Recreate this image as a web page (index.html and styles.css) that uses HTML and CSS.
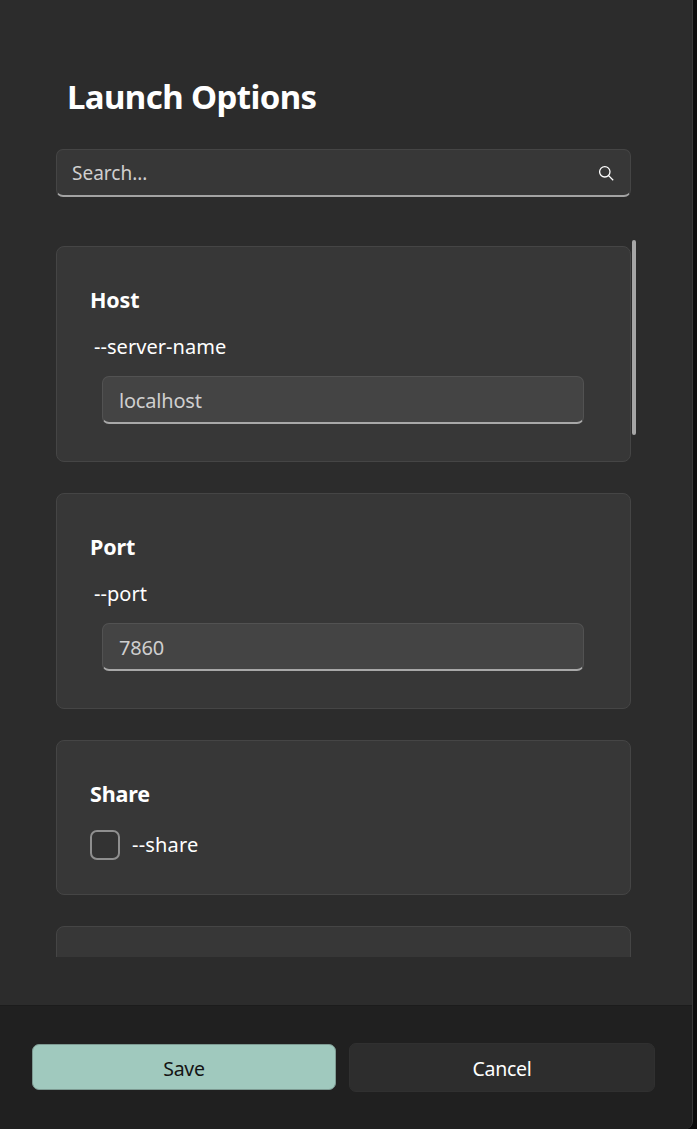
FILE: index.html
```html
<!DOCTYPE html>
<html lang="en">
<head>
<meta charset="utf-8">
<title>Launch Options</title>
<link rel="stylesheet" href="styles.css">
</head>
<body>
<div class="dialog">
  <main class="content">
    <h1 class="title">Launch Options</h1>
    <div class="field search">
      <span class="field-text">Search...</span>
      <svg class="search-icon" width="16" height="16" viewBox="0 0 16 16" fill="none" stroke="#fff" stroke-width="1.3"><circle cx="6.8" cy="6.8" r="5.2"/><path d="M10.6 10.6 15.2 15.2"/></svg>
    </div>
    <div class="scroller">
      <section class="card">
        <h2 class="card-title">Host</h2>
        <div class="option-name">--server-name</div>
        <div class="field inner"><span class="field-text">localhost</span></div>
      </section>
      <section class="card">
        <h2 class="card-title">Port</h2>
        <div class="option-name">--port</div>
        <div class="field inner"><span class="field-text">7860</span></div>
      </section>
      <section class="card card-check">
        <h2 class="card-title">Share</h2>
        <div class="check-row"><span class="checkbox"></span><span class="check-label">--share</span></div>
      </section>
      <section class="card card-cut"></section>
      <div class="scrollbar"></div>
    </div>
  </main>
  <footer class="footer">
    <button class="btn btn-save">Save</button>
    <button class="btn btn-cancel">Cancel</button>
  </footer>
</div>
</body>
</html>
```
FILE: styles.css
```css
* { box-sizing: border-box; }
html, body { margin: 0; height: 100%; background: #0d0d0d; }
body { font-family: "Noto Sans", "Open Sans", sans-serif; color: #fff; overflow: hidden; }
.dialog {
  width: 693px; height: 1129px; display: flex; flex-direction: column;
  background: #2c2c2c; border-right: 1px solid #3a3a3a; border-bottom-right-radius: 8px; overflow: hidden;
}
.content { height: 1005px; padding: 0 61px 0 56px; display: flex; flex-direction: column; flex: none; }
.title { margin: 75px 0 0 11px; height: 44px; font-size: 33px; line-height: 44px; font-weight: 700; letter-spacing: -0.6px; }
.field {
  display: flex; align-items: center; justify-content: space-between; height: 48px;
  border: 1px solid #454545; border-bottom: 2px solid #a3a3a3; border-radius: 7px;
}
.field-text { font-size: 19px; letter-spacing: -0.2px; color: #cfcfcf; }
.search { margin-top: 30px; background: #373737; padding: 1px 16px 0 15px; flex: none; }
.search .field-text { font-size: 19px; letter-spacing: 0; }
.search-icon { width: 16px; height: 16px; margin-bottom: 1px; }
.scroller { position: relative; height: 717px; margin-top: 43px; padding-top: 6px; display: flex; flex-direction: column; gap: 31px; overflow: hidden; flex: none; width: 581px; }
.card {
  width: 575px; height: 216px; flex: none; padding: 38px 46px 0 33px;
  background: #373737; border: 1px solid #454545; border-radius: 8px;
}
.card-check { height: 155px; }
.card-cut { height: 100px; }
.card-title { margin: 0; font-size: 21.5px; line-height: 30px; font-weight: 700; letter-spacing: -0.15px; }
.option-name { margin: 17px 0 0 4px; font-size: 20px; line-height: 30px; height: 30px; letter-spacing: 0.05px; }
.inner { margin: 14px 0 0 12px; background: #444444; padding: 1px 16px 0 16px; border-color: #525252; border-bottom-color: #a8a8a8; }
.inner .field-text { font-size: 20px; }
.check-row { display: flex; align-items: center; gap: 12px; margin-top: 21px; }
.checkbox { width: 30px; height: 30px; border: 2px solid #8f8f8f; border-radius: 7px; background: #333333; }
.check-label { font-size: 20px; letter-spacing: 0.2px; margin-bottom: 2px; }
.scrollbar { position: absolute; top: 0; left: 576px; width: 4px; height: 195px; background: #a6a6a6; border-radius: 2px; }
.footer {
  flex: 1; display: flex; align-items: center; background: #202020; border-top: 1px solid #1c1c1c;
  padding: 0 37px 1px 32px; gap: 13px;
}
.btn { font-family: inherit; font-size: 19.5px; letter-spacing: -0.3px; border-radius: 7px; flex: none; padding: 2px 0 0; }
.btn-save { width: 304px; height: 46px; background: #a0c9be; color: #141414; border: 1px solid #7d9a92; }
.btn-cancel { width: 306px; height: 49px; background: #2d2d2d; color: #fff; border: 1px solid #303030; }
```
